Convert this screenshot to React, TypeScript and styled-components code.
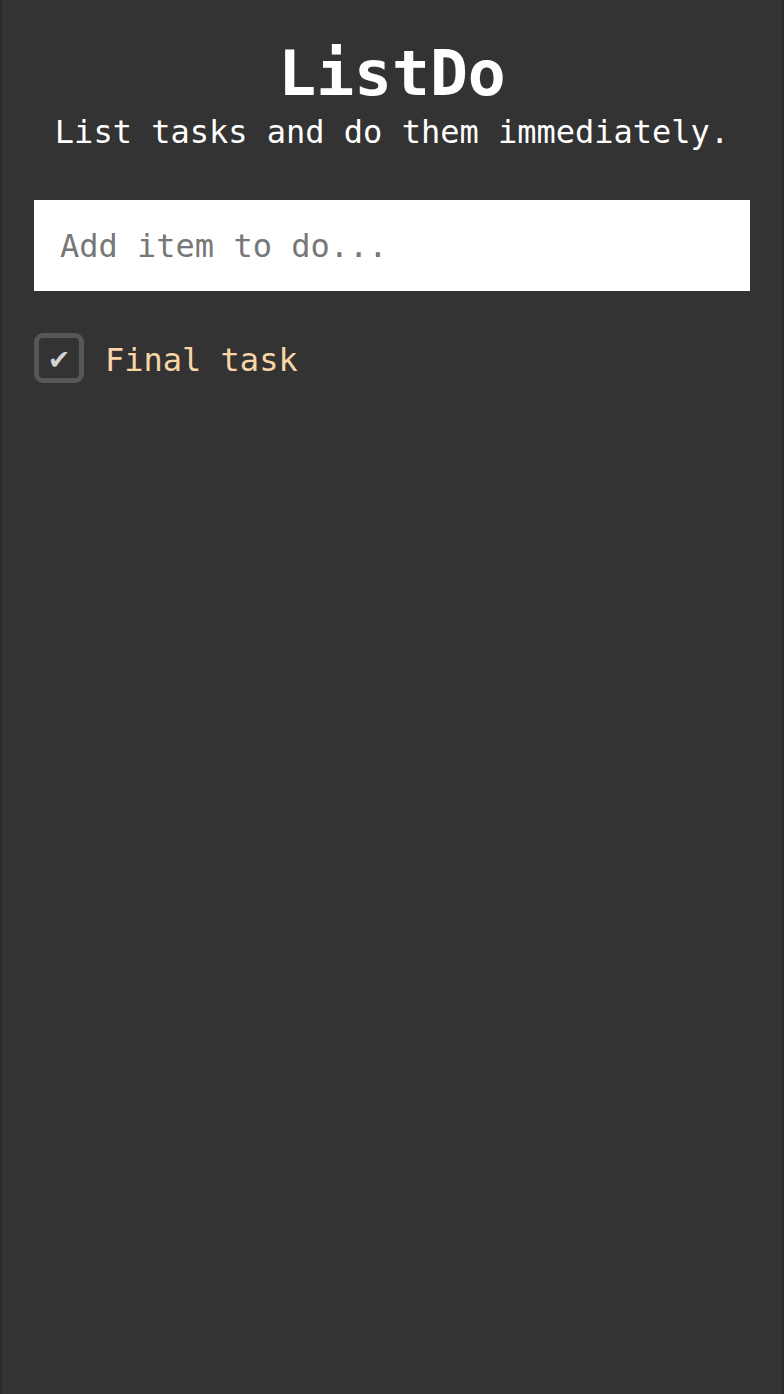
import React, { useState } from "react";
import styled, { createGlobalStyle } from "styled-components";

const GlobalStyle = createGlobalStyle`
  html, body {
    margin: 0;
    padding: 0;
    background: #333333;
  }
  * { box-sizing: border-box; }
`;

const Page = styled.main`
  min-height: 100vh;
  background: #333333;
  border-left: 2px solid #2a2a2a;
  border-right: 2px solid #2a2a2a;
  padding: 42px 32px 32px;
  font-family: "DejaVu Sans Mono", "Liberation Mono", monospace;
  color: #ffffff;
`;

const Header = styled.header`
  display: flex;
  flex-direction: column;
  align-items: center;
  gap: 11px;
  margin-bottom: 52px;
`;

const Title = styled.h1`
  margin: 0;
  font-size: 63px;
  line-height: 63px;
  font-weight: 700;
`;

const Subtitle = styled.p`
  margin: 0;
  font-size: 32px;
  line-height: 32px;
  white-space: nowrap;
`;

const Input = styled.input`
  display: block;
  width: 100%;
  height: 91px;
  border: none;
  outline: none;
  background: #ffffff;
  padding: 0 26px;
  font-family: inherit;
  font-size: 32px;
  color: #333;
  &::placeholder {
    color: #777777;
  }
`;

const List = styled.ul`
  list-style: none;
  margin: 40px 0 0;
  padding: 0;
  display: flex;
  flex-direction: column;
  gap: 16px;
`;

const Item = styled.li`
  display: flex;
  align-items: center;
  gap: 21px;
`;

const Box = styled.span`
  flex: none;
  width: 50px;
  height: 50px;
  border: 5px solid #575757;
  border-radius: 9px;
  display: flex;
  align-items: center;
  justify-content: center;
  color: #d2d2d2;
  font-family: "DejaVu Sans", sans-serif;
  font-size: 27px;
  line-height: 1;
  padding-top: 3px;
`;

const Label = styled.span`
  font-size: 32px;
  line-height: 50px;
  color: #f9d6a8;
  padding-top: 4px;
`;

export default function App() {
  const [value, setValue] = useState("");
  const tasks = ["Final task"];
  return (
    <>
      <GlobalStyle />
      <Page>
        <Header>
          <Title>ListDo</Title>
          <Subtitle>List tasks and do them immediately.</Subtitle>
        </Header>
        <Input
          placeholder="Add item to do..."
          value={value}
          onChange={(e) => setValue(e.target.value)}
        />
        <List>
          {tasks.map((t) => (
            <Item key={t}>
              <Box>✔</Box>
              <Label>{t}</Label>
            </Item>
          ))}
        </List>
      </Page>
    </>
  );
}
